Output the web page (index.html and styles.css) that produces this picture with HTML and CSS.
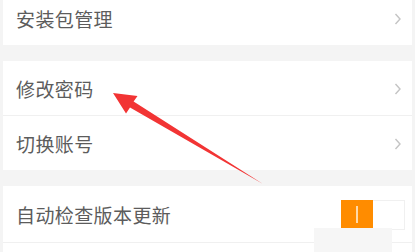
FILE: index.html
```html
<!DOCTYPE html>
<html>
<head>
<meta charset="utf-8">
<link rel="stylesheet" href="styles.css">
</head>
<body>
<div class="page">
  <div class="group first">
    <div class="row"><span class="label">安装包管理</span><svg class="chev" width="8" height="12" viewBox="0 0 8 12"><polyline points="1.5,1 6,6 1.5,11" fill="none" stroke="#c4c4c4" stroke-width="1.4"/></svg></div>
  </div>
  <div class="group">
    <div class="row"><span class="label">修改密码</span><svg class="chev" width="8" height="12" viewBox="0 0 8 12"><polyline points="1.5,1 6,6 1.5,11" fill="none" stroke="#c4c4c4" stroke-width="1.4"/></svg></div>
    <div class="row sep"><span class="label">切换账号</span><svg class="chev" width="8" height="12" viewBox="0 0 8 12"><polyline points="1.5,1 6,6 1.5,11" fill="none" stroke="#c4c4c4" stroke-width="1.4"/></svg></div>
  </div>
  <div class="group">
    <div class="row tall"><span class="label">自动检查版本更新</span>
      <div class="toggle"><div class="knob"><span class="bar"></span></div><div class="off"></div></div>
    </div>
    <div class="row sep short"></div>
  </div>
  <div class="shade"></div>
  <svg class="arrow" width="415" height="252" viewBox="0 0 415 252">
    <polygon points="113,93 137.5,96 133.6,101.6 263,184 130,107.6 126,113.5" fill="#f23434"/>
  </svg>
</div>
</body>
</html>
```
FILE: styles.css
```css
html, body {
  margin: 0;
  padding: 0;
  background: #f4f4f4;
  width: 415px;
  height: 252px;
  overflow: hidden;
}
.page {
  position: relative;
  width: 415px;
  height: 252px;
  display: flex;
  flex-direction: column;
  gap: 16px;
  font-family: "Noto Sans CJK SC", "Noto Sans", sans-serif;
  overflow: hidden;
}
.group {
  background: #ffffff;
  margin: 0 3px;
  display: flex;
  flex-direction: column;
  flex-shrink: 0;
}
.group.first {
  margin-top: -9px;
}
.group:last-of-type {
  margin-top: -1px;
}
.row {
  height: 54px;
  display: flex;
  align-items: center;
  justify-content: space-between;
  padding: 0 10px 0 13px;
  box-sizing: content-box;
}
.row.sep {
  border-top: 1px solid #f0f0f0;
}
.row.tall {
  height: 56px;
}
.row.short {
  height: 10px;
}
.label {
  font-size: 19px;
  color: #5c5c5c;
  letter-spacing: 0.4px;
  line-height: 1;
  padding-top: 1px;
}
.chev {
  margin-top: 1px;
}
.toggle {
  display: flex;
  margin-right: -3px;
  margin-top: 1px;
}
.knob {
  width: 32px;
  height: 30px;
  background: #ff8c00;
  display: flex;
  align-items: center;
  justify-content: center;
}
.bar {
  width: 2px;
  height: 17px;
  background: #ffd9a8;
}
.off {
  width: 31px;
  height: 28px;
  border: 1px solid #f0f0f0;
  border-left: none;
  background: #fff;
}
.shade {
  position: absolute;
  left: 314px;
  top: 228px;
  width: 78px;
  height: 24px;
  background: #f6f6f6;
}
.arrow {
  position: absolute;
  left: 0;
  top: 0;
  filter: blur(0.4px);
}
```
